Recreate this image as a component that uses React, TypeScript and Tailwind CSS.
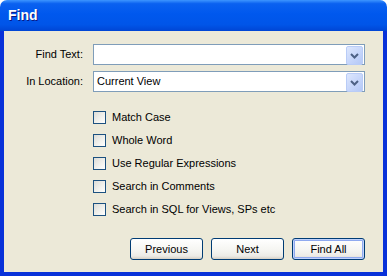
import React from 'react';

const font = { fontFamily: '"Liberation Sans", Arial, sans-serif' };

// combo arrow button
const DropArrow = () => (
  <div className="absolute right-[1px] top-[1px] flex h-[19px] w-[17px] items-center justify-center rounded-[2px] border border-[#B9CCF7] bg-[linear-gradient(135deg,#DDE7FD_0%,#C4D4FA_60%,#B4C8F6_100%)]">
    <svg width="9" height="6" viewBox="0 0 9 6">
      <path d="M1 1 L4.5 4.5 L8 1" fill="none" stroke="#4D6185" strokeWidth="2" />
    </svg>
  </div>
);

const Combo = ({ value }: { value?: string }) => (
  <div className="relative h-[21px] w-[272px] border border-[#7F9DB9] bg-white">
    <span className="absolute left-[3px] top-[3px] text-[11px] leading-[13px] text-black">{value}</span>
    <DropArrow />
  </div>
);

const Check = ({ label }: { label: string }) => (
  <div className="flex h-[23px] items-center gap-[6px]">
    <div className="h-[13px] w-[13px] border border-[#1C5180] bg-[linear-gradient(135deg,#DCDCD7_0%,#F2F2EE_60%,#FFFFFF_100%)]" />
    <span className="text-[11px] leading-[13px] text-black">{label}</span>
  </div>
);

const Btn = ({ label, primary }: { label: string; primary?: boolean }) => (
  <div
    className={`flex h-[22px] w-[73px] items-center justify-center rounded-[3px] border border-[#003C74] bg-[linear-gradient(180deg,#FFFFFF_0%,#F4F4F0_60%,#ECEBE6_85%,#D6D0C5_100%)] text-[11px] text-black ${
      primary ? 'shadow-[inset_0_0_0_1px_#C0D2FC,inset_0_0_0_2px_#8FA9EF]' : ''
    }`}
  >
    {label}
  </div>
);

export default function App() {
  return (
    <div className="flex h-[276px] w-[387px] flex-col bg-white" style={font}>
      {/* title bar */}
      <div className="flex h-[31px] items-center rounded-t-[7px] bg-[linear-gradient(180deg,#3D95FF_0%,#0A61F0_12%,#0058EE_45%,#0055E8_80%,#0045D4_100%)] pl-[8px]">
        <span className="text-[14px] font-bold text-white [text-shadow:1px_1px_0_#0A1883]">Find</span>
      </div>

      {/* body */}
      <div className="flex flex-1 flex-col border-x-4 border-b-4 border-[#0831D9] bg-[#ECE9D8] pt-[13px]">
        <div className="flex items-center gap-[10px]">
          <div className="w-[79px] text-right text-[11px] text-black">Find Text:</div>
          <Combo />
        </div>
        <div className="mt-[6px] flex items-center gap-[10px]">
          <div className="w-[79px] text-right text-[11px] text-black">In Location:</div>
          <Combo value="Current View" />
        </div>

        <div className="ml-[89px] mt-[14px] flex flex-col">
          <Check label="Match Case" />
          <Check label="Whole Word" />
          <Check label="Use Regular Expressions" />
          <Check label="Search in Comments" />
          <Check label="Search in SQL for Views, SPs etc" />
        </div>

        <div className="mr-[18px] mt-auto mb-[12px] flex justify-end gap-[8px]">
          <Btn label="Previous" />
          <Btn label="Next" />
          <Btn label="Find All" primary />
        </div>
      </div>
    </div>
  );
}
